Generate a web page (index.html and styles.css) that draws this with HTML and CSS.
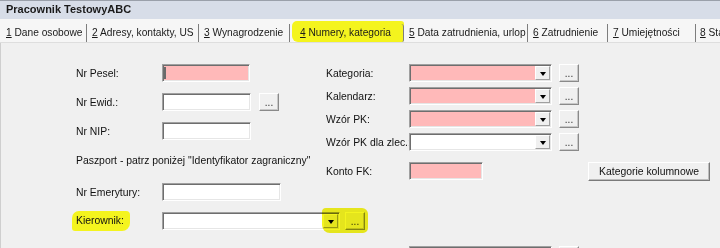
FILE: index.html
```html
<!DOCTYPE html>
<html lang="pl">
<head>
<meta charset="utf-8">
<title>Pracownik TestowyABC</title>
<link rel="stylesheet" href="styles.css">
</head>
<body>
<div class="window">
  <div class="titlebar">Pracownik TestowyABC</div>
  <div class="tabs">
    <div class="tab"><u>1</u> Dane osobowe</div>
    <div class="tab"><u>2</u> Adresy, kontakty, US</div>
    <div class="tab"><u>3</u> Wynagrodzenie</div>
    <div class="tab sel"><u>4</u> Numery, kategoria</div>
    <div class="tab"><u>5</u> Data zatrudnienia, urlop</div>
    <div class="tab"><u>6</u> Zatrudnienie</div>
    <div class="tab"><u>7</u> Umiejętności</div>
    <div class="tab last"><u>8</u> Stanowisko</div>
  </div>
  <div class="content">
    <div class="col col-left">
      <div class="row"><span class="lbl">Nr Pesel:</span><span class="edit req w88"><span class="caret"></span></span></div>
      <div class="row"><span class="lbl">Nr Ewid.:</span><span class="edit w89"></span><span class="dots">...</span></div>
      <div class="row"><span class="lbl">Nr NIP:</span><span class="edit w89"></span></div>
      <div class="row note">Paszport - patrz poniżej "Identyfikator zagraniczny"</div>
      <div class="row"><span class="lbl">Nr Emerytury:</span><span class="edit w119"></span></div>
      <div class="row marked">
        <span class="lbl"><span class="hl">Kierownik:</span></span>
        <span class="combo w178"><span class="arrow"><span class="tri"></span></span></span>
        <span class="dots tight">...</span>
        <span class="marker"></span>
      </div>
    </div>
    <div class="col col-right">
      <div class="row"><span class="lbl">Kategoria:</span><span class="combo req w143"><span class="arrow"><span class="tri"></span></span></span><span class="dots r">...</span></div>
      <div class="row"><span class="lbl">Kalendarz:</span><span class="combo req w143"><span class="arrow"><span class="tri"></span></span></span><span class="dots r">...</span></div>
      <div class="row"><span class="lbl">Wzór PK:</span><span class="combo req w143"><span class="arrow"><span class="tri"></span></span></span><span class="dots r">...</span></div>
      <div class="row"><span class="lbl">Wzór PK dla zlec.:</span><span class="combo w143"><span class="arrow"><span class="tri"></span></span></span><span class="dots r">...</span></div>
      <div class="row konto"><span class="lbl">Konto FK:</span><span class="edit req w74"></span><span class="button">Kategorie kolumnowe</span></div>
      <div class="row bottom"><span class="lbl"></span><span class="combo w143"><span class="arrow"><span class="tri"></span></span></span><span class="dots r">...</span></div>
    </div>
  </div>
</div>
</body>
</html>
```
FILE: styles.css
```css
* { box-sizing: border-box; }
html, body {
  margin: 0;
  padding: 0;
  width: 720px;
  height: 248px;
  overflow: hidden;
  background: #f0f0f0;
  font-family: "Liberation Sans", Arial, sans-serif;
  font-size: 10.4px;
  color: #111;
}
.window {
  width: 720px;
  height: 248px;
  overflow: hidden;
}
.titlebar {
  height: 19px;
  background: #d7dde8;
  border-top: 1px solid #9aa0aa;
  padding-left: 6px;
  line-height: 17px;
  font-weight: bold;
  font-size: 11px;
  color: #1a1a1a;
}
.tabs {
  height: 24px;
  background: #f6f6f6;
  border-bottom: 1px solid #dedede;
  padding-top: 5px;
  display: grid;
  grid-template-columns: 87px 112px 91px 114px 124px 80px 88px 1fr;
  white-space: nowrap;
  font-size: 10.2px;
}
.tab {
  height: 18px;
  line-height: 17px;
  padding-left: 5px;
  border-right: 1px solid #7d7d7d;
  overflow: hidden;
  color: #1a1a1a;
}
.tab:first-child { padding-left: 6px; }
.tab.last { border-right: none; padding-left: 4px; }
.tab u { text-decoration-thickness: 1px; text-underline-offset: 1px; }
.tab.sel {
  background: #f4f41e;
  padding-left: 8px;
  margin-left: 2px;
  border-radius: 5px 3px 2px 6px;
  box-shadow: 0 -3px 0 #f4f41e;
}
.content {
  height: 205px;
  background: #f0f0f0;
  border-left: 1px solid #cfcfcf;
  padding: 21px 0 0 75px;
  display: flex;
  align-items: flex-start;
}
.col {
  display: flex;
  flex-direction: column;
}
.col-left { width: 250px; flex-shrink: 0; gap: 11px; }
.col-right { flex: 1; gap: 5px; }
.row {
  display: flex;
  align-items: center;
  height: 18px;
  white-space: nowrap;
  flex-shrink: 0;
}
.col-left .lbl { width: 86px; flex-shrink: 0; }
.col-right .lbl { width: 83px; flex-shrink: 0; }
.note { margin-bottom: 3px; margin-top: 0; }
.konto { margin-top: 6px; }
.bottom { margin-top: 61px; }
.edit, .combo {
  display: inline-flex;
  justify-content: flex-end;
  height: 18px;
  background: #fff;
  border: 1px solid;
  border-color: #a0a0a0 #ffffff #ffffff #a0a0a0;
  box-shadow: inset 1px 1px 0 #6e6e6e, inset -1px -1px 0 #e6e6e6;
  flex-shrink: 0;
  position: relative;
}
.req { background: #ffb9b9; }
.w74 { width: 74px; }
.w88 { width: 88px; }
.w89 { width: 89px; }
.w119 { width: 119px; }
.w143 { width: 143px; }
.w178 { width: 178px; }
.caret {
  position: absolute;
  left: 1px;
  top: 2px;
  width: 2px;
  height: 12px;
  background: #6a6a6a;
}
.arrow {
  width: 15px;
  height: 14px;
  margin: 1px 1px 0 0;
  background: #f0f0f0;
  border: 1px solid;
  border-color: #ffffff #a0a0a0 #a0a0a0 #ffffff;
  display: flex;
  align-items: center;
  justify-content: center;
}
.tri {
  width: 0;
  height: 0;
  border-left: 3.5px solid transparent;
  border-right: 3.5px solid transparent;
  border-top: 4px solid #000;
  margin-top: 1px;
}
.dots {
  width: 20px;
  height: 18px;
  margin-left: 8px;
  background: #f0f0f0;
  border: 1px solid;
  border-color: #ffffff #8a8a8a #8a8a8a #ffffff;
  box-shadow: inset -1px -1px 0 #c8c8c8;
  text-align: center;
  line-height: 17px;
  font-size: 10px;
  color: #333;
  flex-shrink: 0;
}
.dots.r { margin-left: 7px; }
.dots.tight { margin-left: 5px; }
.button {
  margin-left: 105px;
  width: 122px;
  height: 19px;
  background: #f0f0f0;
  border: 1px solid;
  border-color: #ffffff #7a7a7a #7a7a7a #ffffff;
  box-shadow: inset -1px -1px 0 #bdbdbd;
  text-align: center;
  line-height: 17px;
  color: #111;
  flex-shrink: 0;
}
.marked { position: relative; }
.hl {
  display: inline-block;
  background: #f4f41e;
  margin-left: -4px;
  padding: 4px 6px 5px 4px;
  border-radius: 7px 4px 8px 3px;
}
.marker {
  position: absolute;
  left: 246px;
  top: -4px;
  width: 46px;
  height: 25px;
  background: #f4f41e;
  mix-blend-mode: multiply;
  border-radius: 4px 6px 5px 8px;
}
```
